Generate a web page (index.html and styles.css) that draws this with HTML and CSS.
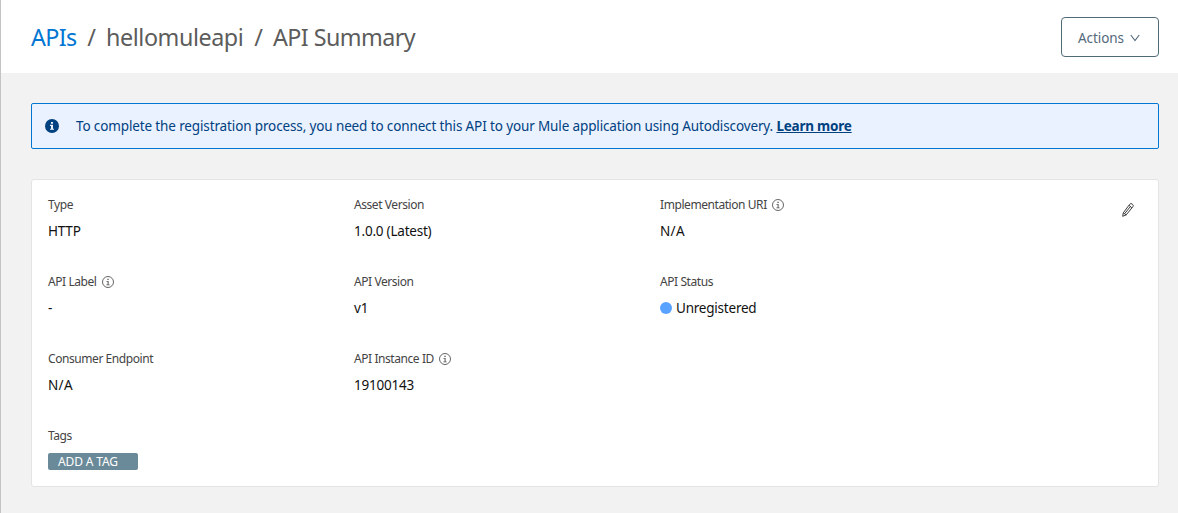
FILE: index.html
```html
<!DOCTYPE html>
<html lang="en">
<head>
<meta charset="utf-8">
<title>API Summary</title>
<link rel="stylesheet" href="styles.css">
</head>
<body>
<svg class="defs" width="0" height="0" aria-hidden="true">
  <symbol id="info" viewBox="0 0 12 12">
    <circle cx="6" cy="6" r="5.5" fill="none" stroke="currentColor" stroke-width=".9"/>
    <path d="M5.4 2.7h1.3v1.2H5.4zM4.500 5h2.100v3.400h1v.8H4.400v-.8h1.200V5.800H4.500z" fill="currentColor"/>
  </symbol>
</svg>
<header class="header">
  <h1 class="crumbs"><a class="crumb crumb-link" href="#">APIs</a><span class="slash">/</span><span class="crumb crumb-name">hellomuleapi</span><span class="slash">/</span><span class="crumb crumb-page">API Summary</span></h1>
  <button class="actions"><span>Actions</span><svg class="chevron" width="10" height="8" viewBox="0 0 10 8"><path d="M.8 1 5 6.6 9.2 1" fill="none" stroke="currentColor" stroke-width="1.1"/></svg></button>
</header>
<main class="main">
  <div class="banner">
    <svg class="banner-icon" width="14" height="14" viewBox="0 0 14 14"><circle cx="7" cy="7" r="7" fill="#00417f"/><path d="M6 3h2v1.800H6zM5 5.800h3v3.900h1v1.100H5V9.700h1V6.900H5z" fill="#eaf2ff"/></svg>
    <p class="banner-text">To complete the registration process, you need to connect this API to your Mule application using Autodiscovery. <a class="learn" href="#">Learn more</a></p>
  </div>
  <section class="card">
    <dl class="grid">
      <div class="field"><dt>Type</dt><dd>HTTP</dd></div>
      <div class="field"><dt>Asset Version</dt><dd>1.0.0 (Latest)</dd></div>
      <div class="field"><dt>Implementation URI<svg class="info"><use href="#info"/></svg></dt><dd class="none">N/A</dd></div>
      <div class="field"><dt>API Label<svg class="info"><use href="#info"/></svg></dt><dd>-</dd></div>
      <div class="field"><dt>API Version</dt><dd>v1</dd></div>
      <div class="field"><dt>API Status</dt><dd><span class="dot"></span>Unregistered</dd></div>
      <div class="field"><dt>Consumer Endpoint</dt><dd class="none">N/A</dd></div>
      <div class="field"><dt>API Instance ID<svg class="info"><use href="#info"/></svg></dt><dd>19100143</dd></div>
      <div class="field field-tags"><dt>Tags</dt><dd><span class="tag">ADD A TAG</span></dd></div>
    </dl>
    <svg class="edit" width="12" height="14" viewBox="0 0 12 14"><path d="M.7 13.300 1.300 9.800 7.700 1.300Q8.700.1 10 .9L10.700 1.500Q11.700 2.500 10.900 3.700L4.200 11.900ZM7 2.300 9.900 4.800M1.300 9.800 4.200 11.900M2.700 10.600 8.400 3.600" fill="none" stroke="#333" stroke-width=".95"/></svg>
  </section>
</main>
</body>
</html>
```

FILE: styles.css
```css
* { box-sizing: border-box; }
body {
  margin: 0;
  height: 513px;
  overflow: hidden;
  background: #f2f2f2;
  border-left: 1px solid #c4c4c4;
  font-family: "Noto Sans", "Open Sans", sans-serif;
  font-size: 13.5px;
  color: #111;
}
.defs { display: block; }
.header {
  height: 73px;
  padding: 1px 19px 0 30px;
  background: #fff;
  display: flex;
  align-items: center;
  justify-content: space-between;
}
.crumbs {
  margin: 0;
  padding-bottom: 1px;
  display: flex;
  font-size: 23.3px;
  line-height: 32px;
  font-weight: 400;
  color: #5c5c5c;
}
.crumb { white-space: nowrap; }
.crumb-link { width: 46px; color: #0176d3; text-decoration: none; letter-spacing: -.6px; }
.crumb-name { width: 138px; letter-spacing: -.42px; }
.crumb-page { letter-spacing: -.57px; }
.slash { width: 29px; text-align: center; }
.actions {
  width: 98px;
  height: 40px;
  padding: 2px 0 0 16px;
  border: 1px solid #506a78;
  border-radius: 4px;
  background: #fff;
  color: #54697a;
  font: inherit;
  letter-spacing: -.07px;
  display: flex;
  align-items: center;
  gap: 6px;
}
.chevron { margin-bottom: 1px; }
.main {
  padding: 30px 19px 0 30px;
  display: flex;
  flex-direction: column;
  gap: 30px;
}
.banner {
  height: 46px;
  padding: 0 13px;
  border: 1px solid #0176d3;
  border-radius: 2px;
  background: #ebf2ff;
  color: #00417f;
  display: flex;
  align-items: center;
  gap: 17px;
}
.banner-text { margin: 0 0 1px; white-space: nowrap; letter-spacing: -.13px; }
.learn { color: #00417f; font-weight: 700; letter-spacing: -.22px; }
.card {
  height: 308px;
  padding: 16px 24px 0 16px;
  border: 1px solid #e4e4e4;
  border-radius: 3px;
  background: #fff;
  display: flex;
  justify-content: space-between;
}
.grid {
  margin: 0;
  display: grid;
  grid-template-columns: repeat(3, 306px);
  grid-auto-rows: 77px;
}
.field-tags { grid-column: 1; }
.field dt {
  height: 18px;
  line-height: 18px;
  font-size: 12px;
  color: #444;
  display: flex;
  align-items: center;
  gap: 5px;
  letter-spacing: -.43px;
}
.field dd {
  margin: 7px 0 0;
  height: 20px;
  line-height: 20px;
  display: flex;
  align-items: center;
  letter-spacing: -.22px;
}
.field .none { letter-spacing: .3px; }
.info { width: 12px; height: 12px; color: #555; }
.dot { width: 12px; height: 12px; margin-right: 4px; border-radius: 50%; background: #5aa2ff; }
.field-tags dd { margin-top: 6px; }
.field .tag {
  width: 90px;
  height: 17px;
  padding-left: 10px;
  border-radius: 2px;
  background: #6b8a99;
  color: #fff;
  font-size: 12px;
  line-height: 17px;
  letter-spacing: -.15px;
}
.edit { margin-top: 7px; }
```
